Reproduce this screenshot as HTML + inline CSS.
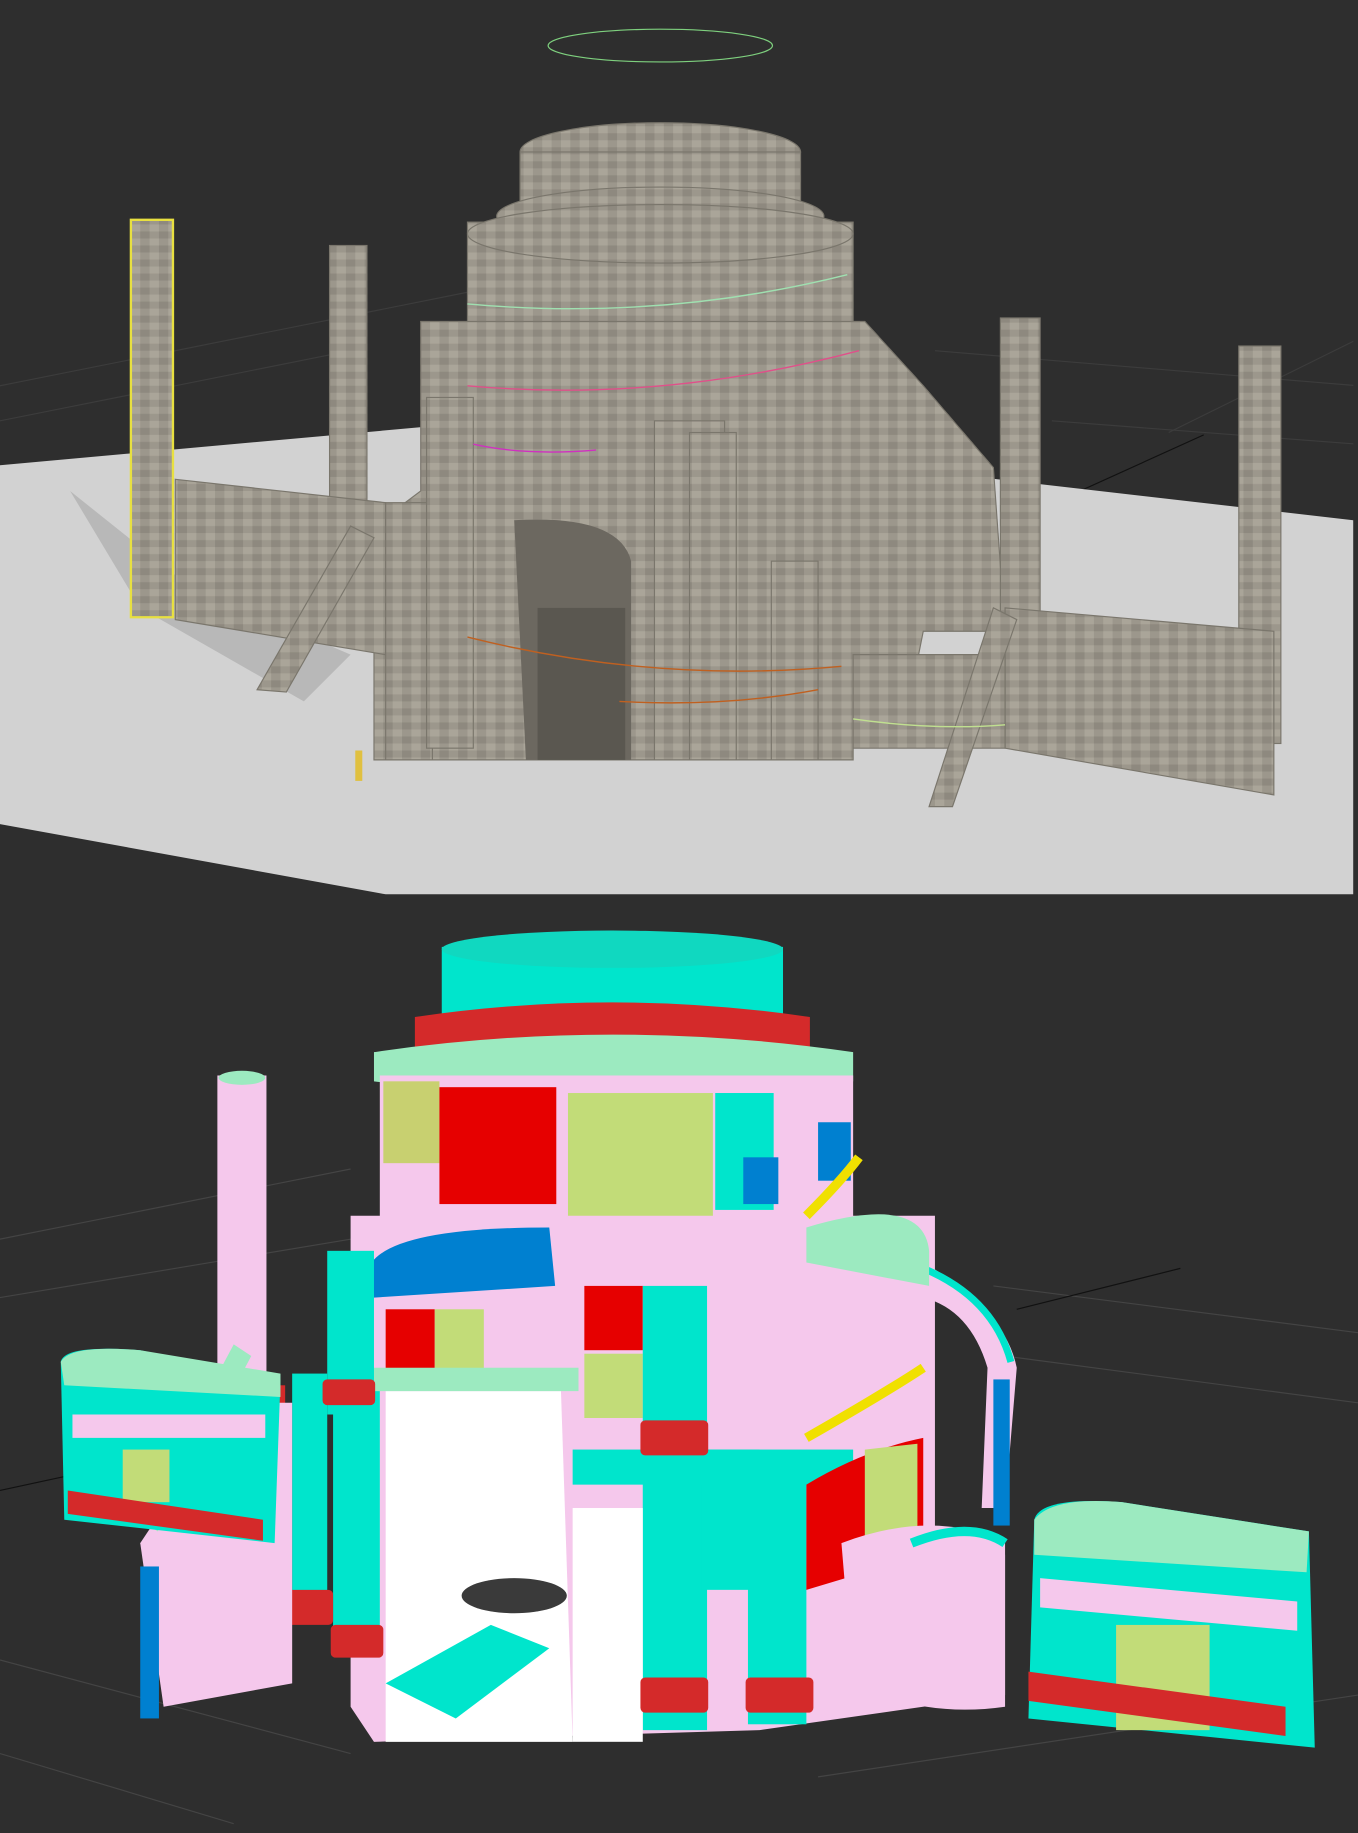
<!DOCTYPE html>
<html><head><meta charset="utf-8"><style>
html,body{margin:0;padding:0;background:#2e2e2e;overflow:hidden}
svg{display:block}
</style></head><body>
<svg width="1358" height="1833" viewBox="0 0 1162 1568" preserveAspectRatio="none" xmlns="http://www.w3.org/2000/svg">
<defs>
<pattern id="st" width="16" height="12" patternUnits="userSpaceOnUse">
<rect width="16" height="12" fill="#9c978c"/>
<rect x="0" y="0" width="8" height="6" fill="#aaa599"/>
<rect x="8" y="6" width="8" height="6" fill="#8e897f"/>
</pattern>
</defs>
<rect width="1162" height="1568" fill="#2e2e2e"/>
<g stroke="#3c3c3c" stroke-width="1">
<line x1="0" y1="330" x2="400" y2="250"/><line x1="0" y1="360" x2="300" y2="300"/>
<line x1="800" y1="300" x2="1162" y2="330"/><line x1="900" y1="360" x2="1162" y2="380"/>
<line x1="1000" y1="370" x2="1162" y2="290"/>
</g>
<line x1="1030" y1="372" x2="880" y2="440" stroke="#111" stroke-width="1"/>
<polygon points="0,398 420,360 1158,445 1158,765 330,765 0,705" fill="#d2d2d2"/>
<rect x="1158" y="0" width="4" height="768" fill="#2e2e2e"/>
<ellipse cx="565" cy="39" rx="96" ry="14" fill="none" stroke="#7ed07e" stroke-width="1"/>
<polygon points="60,420 160,500 300,560 260,600 120,520" fill="#b8b8b8"/>
<g fill="url(#st)" stroke="#7a766c" stroke-width="1">
<ellipse cx="565" cy="130" rx="120" ry="25"/>
<rect x="445" y="130" width="240" height="50"/>
<ellipse cx="565" cy="185" rx="140" ry="25"/>
<rect x="400" y="190" width="330" height="120"/>
<ellipse cx="565" cy="200" rx="165" ry="25"/>
<path d="M360,275 L740,275 L790,330 L850,400 L860,540 L790,540 L780,590 L730,600 L730,650 L320,650 L320,450 L360,420 Z"/>
<rect x="112" y="188" width="36" height="340"/>
<rect x="282" y="210" width="32" height="240"/>
<rect x="856" y="272" width="34" height="260"/>
<rect x="1060" y="296" width="36" height="340"/>
<polygon points="150,410 330,430 330,560 150,530"/>
<polygon points="860,520 1090,540 1090,680 860,640"/>
<polygon points="730,560 860,560 860,640 730,640"/>
<polygon points="220,590 300,450 320,460 245,592"/>
<polygon points="795,690 850,520 870,530 815,690"/>
<rect x="560" y="360" width="60" height="290"/>
<rect x="590" y="370" width="40" height="280"/>
<rect x="330" y="430" width="40" height="220"/>
<rect x="365" y="340" width="40" height="300"/>
<rect x="660" y="480" width="40" height="170"/>
</g>
<path d="M440,445 Q530,440 540,480 L540,650 L450,650 Z" fill="#6c6860"/>
<rect x="460" y="520" width="75" height="130" fill="#5a5750"/>
<path d="M112,188 L148,188 L148,528 L112,528 Z" fill="none" stroke="#e8e040" stroke-width="2"/>
<rect x="304" y="642" width="6" height="26" fill="#e0c040"/>
<g fill="none" stroke-width="1.2">
<path d="M400,260 Q565,275 725,235" stroke="#9fe0b0"/>
<path d="M400,330 Q565,345 735,300" stroke="#e0508a"/>
<path d="M405,380 Q450,390 510,385" stroke="#d030c0"/>
<path d="M400,545 Q560,585 720,570" stroke="#c06020"/>
<path d="M530,600 Q620,605 700,590" stroke="#c06020"/>
<path d="M730,615 Q800,625 860,620" stroke="#c0e090"/>
</g>
<g stroke="#444" stroke-width="1">
<line x1="0" y1="1060" x2="300" y2="1000"/><line x1="0" y1="1110" x2="300" y2="1060"/>
<line x1="850" y1="1100" x2="1162" y2="1140"/><line x1="860" y1="1160" x2="1162" y2="1200"/>
<line x1="0" y1="1420" x2="300" y2="1500"/><line x1="700" y1="1520" x2="1162" y2="1450"/>
<line x1="0" y1="1500" x2="200" y2="1560"/>
</g>
<line x1="870" y1="1120" x2="1010" y2="1085" stroke="#111"/>
<line x1="0" y1="1275" x2="60" y2="1262" stroke="#111"/>
<rect x="378" y="810" width="292" height="80" fill="#00e5cc"/>
<ellipse cx="524" cy="812" rx="146" ry="16" fill="#10d8c0"/>
<path d="M355,870 Q524,845 693,870 L693,900 Q524,930 355,900 Z" fill="#d42a2a"/>
<path d="M320,900 Q524,870 730,900 L730,925 Q524,950 320,925 Z" fill="#9ceac0"/>
<rect x="325" y="920" width="405" height="130" fill="#f5c8ec"/>
<rect x="328" y="925" width="48" height="70" fill="#c8d070"/>
<rect x="376" y="930" width="100" height="100" fill="#e60000"/>
<rect x="486" y="935" width="124" height="110" fill="#c2dc78"/>
<rect x="612" y="935" width="50" height="100" fill="#00e5cc"/>
<rect x="636" y="990" width="30" height="40" fill="#0080d0"/>
<rect x="700" y="960" width="28" height="50" fill="#0080d0"/>
<path d="M300,1040 L800,1040 L800,1350 L860,1330 L860,1450 L650,1480 L320,1490 L300,1460 Z" fill="#f5c8ec"/>
<path d="M790,1080 Q860,1120 870,1170 L860,1290 L840,1290 L845,1170 Q830,1120 790,1110 Z" fill="#f5c8ec"/>
<path d="M790,1085 Q850,1110 865,1165" stroke="#00e5cc" stroke-width="6" fill="none"/>
<path d="M318,1080 Q340,1050 470,1050 L475,1100 L320,1110 Z" fill="#0080d0"/>
<rect x="330" y="1120" width="42" height="55" fill="#e60000"/>
<rect x="372" y="1120" width="42" height="55" fill="#c2dc78"/>
<rect x="500" y="1100" width="50" height="55" fill="#e60000"/>
<rect x="500" y="1158" width="50" height="55" fill="#c2dc78"/>
<path d="M330,1190 L480,1190 L490,1490 L330,1490 Z" fill="#ffffff"/>
<rect x="315" y="1170" width="180" height="20" fill="#9ceac0"/>
<ellipse cx="440" cy="1365" rx="45" ry="15" fill="#3a3a3a"/>
<rect x="250" y="1175" width="30" height="210" fill="#00e5cc"/>
<rect x="280" y="1070" width="40" height="140" fill="#00e5cc"/>
<rect x="285" y="1190" width="40" height="220" fill="#00e5cc"/>
<rect x="550" y="1100" width="55" height="380" fill="#00e5cc"/>
<rect x="640" y="1245" width="50" height="230" fill="#00e5cc"/>
<rect x="600" y="1240" width="50" height="120" fill="#00e5cc"/>
<rect x="490" y="1240" width="240" height="30" fill="#00e5cc"/>
<rect x="490" y="1290" width="60" height="200" fill="#ffffff"/>
<g fill="#d42a2a">
<rect x="548" y="1215" width="58" height="30" rx="4"/>
<rect x="548" y="1435" width="58" height="30" rx="4"/>
<rect x="638" y="1435" width="58" height="30" rx="4"/>
<rect x="245" y="1360" width="40" height="30" rx="4"/>
<rect x="283" y="1390" width="45" height="28" rx="4"/>
<rect x="276" y="1180" width="45" height="22" rx="4"/>
<rect x="222" y="1185" width="22" height="25"/>
</g>
<path d="M690,1270 Q740,1240 790,1230 L790,1330 L690,1360 Z" fill="#e60000"/>
<path d="M740,1240 L785,1235 L785,1330 L740,1345 Z" fill="#c2dc78"/>
<path d="M690,1230 Q760,1190 790,1170" stroke="#f0e000" stroke-width="8" fill="none"/>
<path d="M690,1040 Q720,1010 735,990" stroke="#f0e000" stroke-width="8" fill="none"/>
<path d="M690,1050 Q790,1020 795,1070 L795,1100 L690,1080 Z" fill="#9ceac0"/>
<path d="M720,1320 Q800,1290 860,1320 L860,1460 Q790,1470 730,1440 Z" fill="#f5c8ec"/>
<path d="M780,1320 Q830,1300 860,1320" stroke="#00e5cc" stroke-width="8" fill="none"/>
<rect x="850" y="1180" width="14" height="125" fill="#0080d0"/>
<rect x="186" y="920" width="42" height="300" fill="#f5c8ec"/>
<ellipse cx="207" cy="922" rx="20" ry="6" fill="#9ceac0"/>
<path d="M120,1320 L200,1200 L250,1200 L250,1440 L140,1460 Z" fill="#f5c8ec"/>
<rect x="120" y="1340" width="16" height="130" fill="#0080d0"/>
<polygon points="120,1300 200,1150 215,1160 135,1310" fill="#9ceac0"/>
<path d="M330,1440 L420,1390 L470,1410 L390,1470 Z" fill="#00e5cc"/>
<path d="M52,1165 Q55,1150 120,1155 L240,1180 L235,1320 L55,1300 Z" fill="#00e5cc"/>
<path d="M52,1165 Q60,1150 120,1155 L240,1175 L240,1195 L55,1185 Z" fill="#9ceac0"/>
<rect x="62" y="1210" width="165" height="20" fill="#f5c8ec"/>
<rect x="105" y="1240" width="40" height="45" fill="#c2dc78"/>
<polygon points="58,1275 225,1300 225,1318 58,1295" fill="#d42a2a"/>
<path d="M885,1300 Q890,1280 960,1285 L1120,1310 L1125,1495 L880,1470 Z" fill="#00e5cc"/>
<path d="M885,1300 Q900,1280 960,1285 L1120,1310 L1118,1345 L885,1330 Z" fill="#9ceac0"/>
<polygon points="890,1350 1110,1370 1110,1395 890,1375" fill="#f5c8ec"/>
<rect x="955" y="1390" width="80" height="90" fill="#c2dc78"/>
<polygon points="880,1430 1100,1460 1100,1485 880,1455" fill="#d42a2a"/>
</svg>
</body></html>
